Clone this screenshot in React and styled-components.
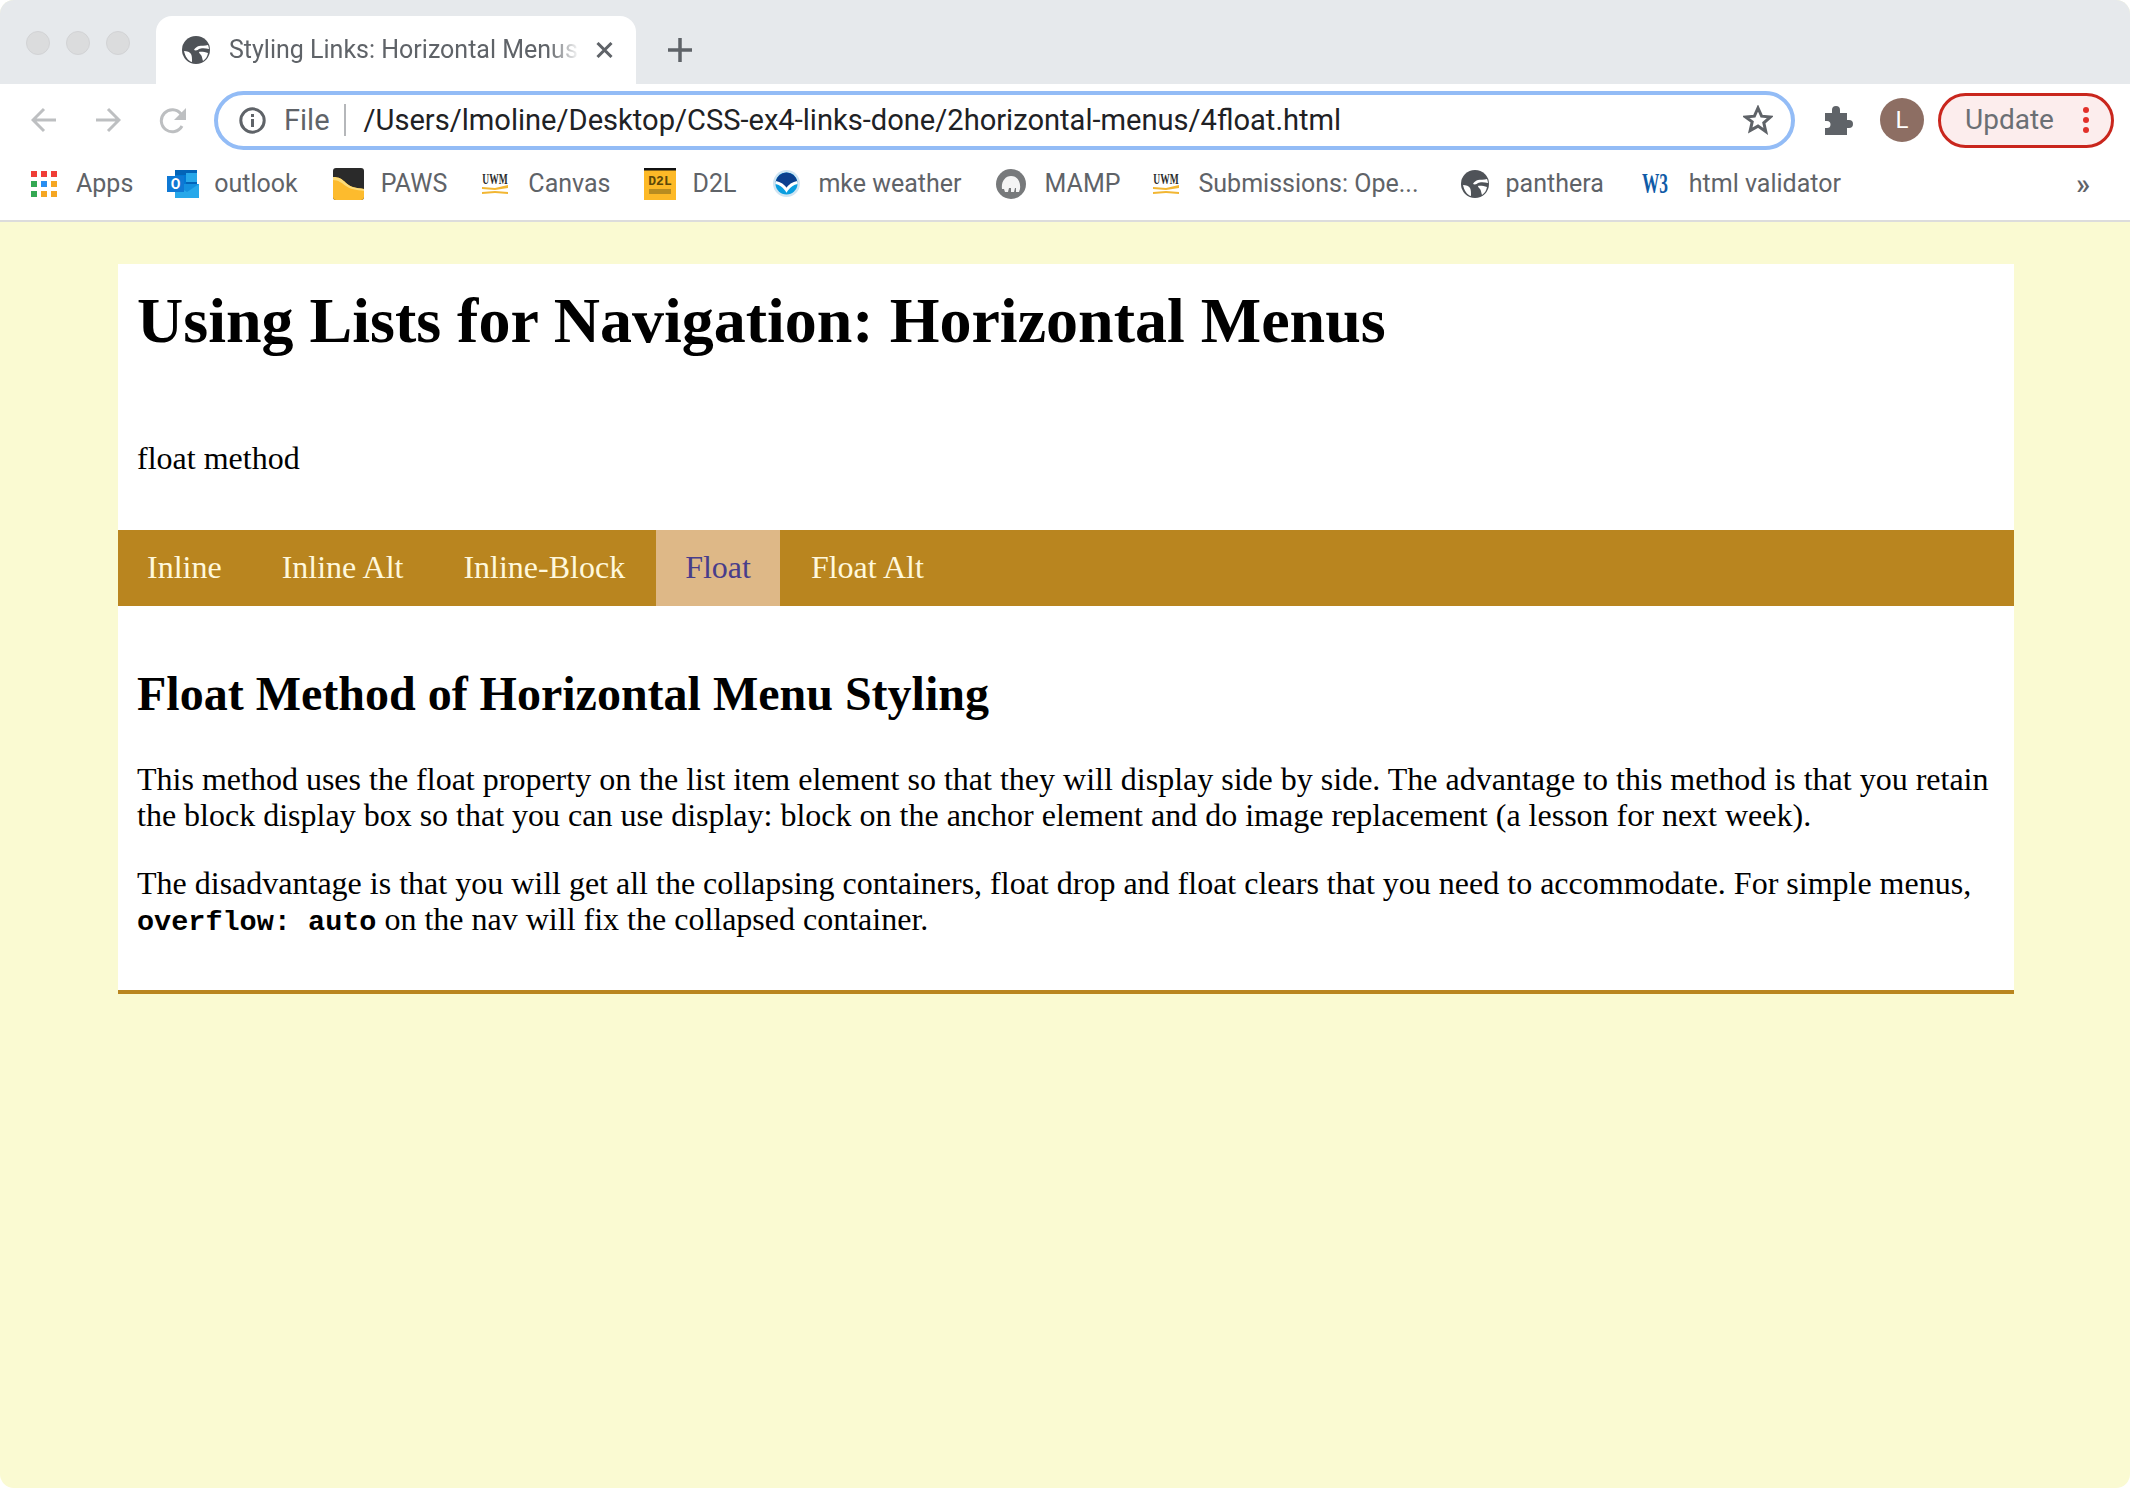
import React from "react";
import styled, { createGlobalStyle } from "styled-components";

const GlobalStyle = createGlobalStyle`
  html, body {
    margin: 0;
    padding: 0;
    background: #fff;
  }
  * {
    box-sizing: border-box;
  }
`;

const Window = styled.div`
  width: 2130px;
  height: 1488px;
  overflow: hidden;
  border-radius: 14px;
  background: #fafad2;
  display: flex;
  flex-direction: column;
`;

const TabStrip = styled.div`
  height: 84px;
  flex: none;
  background: #e6e9ec;
  display: flex;
  align-items: flex-end;
  padding-left: 26px;
`;

const Lights = styled.div`
  display: flex;
  gap: 16px;
  align-self: flex-start;
  margin-top: 31px;
  margin-right: 26px;
`;

const Light = styled.span`
  width: 24px;
  height: 24px;
  border-radius: 50%;
  background: #dbdcdd;
  border: 1px solid #d2d3d5;
`;

const Tab = styled.div`
  width: 480px;
  height: 68px;
  background: #fff;
  border-radius: 16px 16px 0 0;
  display: flex;
  align-items: center;
  padding: 0 23px 0 26px;
`;

const TabTitle = styled.span`
  margin: 0 16px 0 19px;
  width: 351px;
  flex: none;
  overflow: hidden;
  white-space: nowrap;
  font: 400 25px/30px Roboto, "Noto Sans", sans-serif;
  color: #5f6368;
  -webkit-mask-image: linear-gradient(to right, #000 91%, transparent 100%);
  mask-image: linear-gradient(to right, #000 91%, transparent 100%);
`;

const NewTab = styled.div`
  margin: 0 0 10px 32px;
  width: 24px;
  height: 48px;
  display: flex;
  align-items: center;
`;

const Toolbar = styled.div`
  height: 68px;
  flex: none;
  background: #fff;
  display: flex;
  align-items: center;
  padding: 4px 16px 0 31px;
`;

const NavIcons = styled.div`
  display: flex;
  align-items: center;
  gap: 38px;
  margin-right: 27px;
`;

const Omnibox = styled.div`
  width: 1582px;
  height: 59px;
  border: 4px solid #93bcf6;
  border-radius: 30px;
  display: flex;
  align-items: center;
  padding: 0 18px 0 21px;
`;

const OriginLabel = styled.span`
  margin-left: 18px;
  font: 400 29px/36px Roboto, "Noto Sans", sans-serif;
  color: #5f6368;
`;

const Divider = styled.span`
  width: 2px;
  height: 32px;
  background: #b5b7ba;
  margin: 0 18px 0 14px;
`;

const UrlText = styled.span`
  flex: 1;
  font: 400 29.1px/36px Roboto, "Noto Sans", sans-serif;
  color: #202124;
  white-space: nowrap;
`;

const ToolbarRight = styled.div`
  display: flex;
  align-items: center;
  margin-left: 28px;
`;

const Avatar = styled.div`
  width: 44px;
  height: 44px;
  margin-left: 27px;
  border-radius: 50%;
  background: #8d6e63;
  color: #fff;
  display: flex;
  align-items: center;
  justify-content: center;
  font: 400 24px Roboto, sans-serif;
`;

const UpdatePill = styled.div`
  width: 176px;
  height: 55px;
  margin-left: 14px;
  border: 3px solid #c9261d;
  border-radius: 28px;
  background: #fceded;
  display: flex;
  align-items: center;
  justify-content: space-between;
  padding: 0 22px 0 24px;
  font: 400 28px/34px Roboto, sans-serif;
  color: #6b6f74;
`;

const Dots = styled.div`
  display: flex;
  flex-direction: column;
  gap: 4px;
  & span {
    width: 6px;
    height: 6px;
    border-radius: 50%;
    background: #e2302a;
  }
`;

const BookmarkBar = styled.div`
  height: 70px;
  flex: none;
  background: #fff;
  border-bottom: 2px solid #dcdcdc;
  display: flex;
  align-items: center;
  padding: 0 0 5px 31px;
`;

const Bookmark = styled.div`
  display: flex;
  align-items: center;
  margin-right: ${(p) => p.$after || 34}px;
  font: 400 25px/30px Roboto, "Noto Sans", sans-serif;
  color: #5f6368;
  white-space: nowrap;
  & svg {
    margin-right: ${(p) => p.$gap || 19}px;
    flex: none;
  }
`;

const Overflow = styled.span`
  margin-left: auto;
  margin-right: 40px;
  font: 500 29px/30px Roboto, sans-serif;
  color: #5f6368;
`;

const PageBody = styled.div`
  flex: 1;
  padding: 42px 116px 0 118px;
  font-family: "Liberation Serif", "Times New Roman", serif;
  color: #000;
`;

const Wrapper = styled.div`
  background: #fff;
  border-bottom: 4px solid #b9851f;
  height: 730px;
`;

const Header = styled.header`
  padding: 0 19px;
  height: 266px;
`;

const Title = styled.h1`
  margin: 0;
  padding-top: 21px;
  font-size: 64px;
  line-height: 72px;
  font-weight: 700;
`;

const Subtitle = styled.p`
  margin: 83px 0 0;
  font-size: 32px;
  line-height: 36px;
`;

const Menu = styled.ul`
  margin: 0;
  padding: 0;
  list-style: none;
  height: 76px;
  background: #b9851f;
  display: flex;
  gap: 2px;
`;

const MenuItem = styled.li`
  padding: 0 29px 2px;
  display: flex;
  align-items: center;
  font-size: 32px;
  color: ${(p) => (p.$active ? "#483d8b" : "#fff8dc")};
  background: ${(p) => (p.$active ? "#deb887" : "transparent")};
`;

const Content = styled.section`
  padding: 0 19px;
`;

const SectionTitle = styled.h2`
  margin: 0;
  padding-top: 64px;
  font-size: 48px;
  line-height: 48px;
  font-weight: 700;
`;

const Para = styled.p`
  margin: ${(p) => (p.$first ? "43px" : "32px")} 0 0;
  font-size: 32px;
  line-height: 36px;
`;

const Code = styled.code`
  font-family: "Liberation Mono", "Courier New", monospace;
  font-size: 28.5px;
  font-weight: 700;
`;

const GlobeIcon = () => (
  <svg width="28" height="28" viewBox="0 0 28 28">
    <circle cx="14" cy="14" r="14" fill="#4f5358" />
    <path d="M26 9c-3 1-7 .5-9 1-2 .5-4 2-5 4 2 1 4 0 5-1 2-1 6-1 10 0-.2-1.500-.5-3-1-4zM17 16c2-.5 6 0 9 1-.5 3-2 6-5 8-1-3-1-5-2-6s-2-2-2-3zM2 15c3 0 6 1 7 3s1 4 1 8C6 25 3 20 2 15z" fill="#fff" />
  </svg>
);

const BackIcon = ({ flip }) => (
  <svg width="26" height="26" viewBox="0 0 26 26" style={flip ? { transform: "scaleX(-1)" } : undefined}>
    <path d="M25 13H2M13 2L2 13l11 11" fill="none" stroke="#bdbfc1" strokeWidth="3" />
  </svg>
);

const ReloadIcon = () => (
  <svg width="28" height="27" viewBox="0 0 28 27">
    <path d="M23 19a11 11 0 1 1-1-12" fill="none" stroke="#bdbfc1" strokeWidth="3" />
    <path d="M27 1v12H15z" fill="#bdbfc1" />
  </svg>
);

const InfoIcon = () => (
  <svg width="27" height="27" viewBox="0 0 27 27">
    <circle cx="13.500" cy="13.500" r="11.700" fill="none" stroke="#5f6368" strokeWidth="3" />
    <rect x="12" y="12" width="3" height="8" fill="#5f6368" />
    <rect x="12" y="7" width="3" height="3" fill="#5f6368" />
  </svg>
);

const StarIcon = () => (
  <svg width="30" height="30" viewBox="0 0 30 30">
    <path d="M15 3l3.600 8.200 8.900.8-6.700 5.900 2 8.700L15 21.100 7.200 25.600l2-8.700L2.500 12l8.900-.8z" fill="none" stroke="#5f6368" strokeWidth="3" strokeLinejoin="miter" />
  </svg>
);

const PuzzleIcon = () => (
  <svg width="30" height="29" viewBox="0 0 30 29">
    <path d="M2 7h7V4a4 4 0 0 1 8 0v3h7v7h2a4 4 0 0 1 0 8h-2v7H2v-7h2a3.500 3.500 0 0 0 0-7H2z" fill="#5f6368" />
  </svg>
);

const AppsIcon = () => {
  const colors = ["#ef3e36", "#ef3e36", "#ef3e36", "#34a853", "#2a8df0", "#f5a623", "#34a853", "#f5a623", "#f5a623"];
  return (
    <svg width="26" height="26" viewBox="0 0 26 26">
      {colors.map((c, i) => (
        <rect key={i} x={(i % 3) * 10} y={Math.floor(i / 3) * 10} width="6" height="6" fill={c} />
      ))}
    </svg>
  );
};

const OutlookIcon = () => (
  <svg width="32" height="28" viewBox="0 0 32 28">
    <rect x="8" y="0" width="22" height="14" fill="#0364b8" />
    <rect x="19" y="3" width="11" height="9" fill="#28a8ea" />
    <rect x="8" y="5" width="11" height="9" fill="#0078d4" />
    <path d="M8 14h24v14H8z" fill="#1490df" />
    <path d="M8 14l12 8 12-8v14H8z" fill="#28a8ea" />
    <rect x="0" y="6" width="17" height="16" fill="#0f78d4" />
    <text x="8.500" y="19" textAnchor="middle" fontFamily="Roboto, sans-serif" fontSize="14" fontWeight="700" fill="#fff">O</text>
  </svg>
);

const PawsIcon = () => (
  <svg width="33" height="32" viewBox="0 0 33 32">
    <rect x="1" y="0" width="31" height="32" rx="3" fill="#2a2a2a" />
    <path d="M1 9c6 0 9 2 13 6 4 4 10 5 18 6v8a3 3 0 0 1-3 3H4a3 3 0 0 1-3-3z" fill="#fdbb2d" />
    <path d="M1 9c6 0 9 2 13 6 4 4 10 5 18 6v2c-8-1-14-2-18-5-4-3-8-6-13-6z" fill="#fddc7a" />
  </svg>
);

const UwmIcon = () => (
  <svg width="26" height="26" viewBox="0 0 26 26">
    <text transform="translate(13 13) scale(.68 1)" textAnchor="middle" fontFamily="Liberation Serif, serif" fontSize="14" fontWeight="700" fill="#2c2c2c">UWM</text>
    <path d="M0 16l13 1 13-3v3l-13 2-13-1zM0 21l13-1 13 1v2l-13-1-13 1z" fill="#f2b632" />
  </svg>
);

const D2lIcon = () => (
  <svg width="32" height="32" viewBox="0 0 32 32">
    <rect width="32" height="32" fill="#fdb927" />
    <rect width="32" height="2.500" fill="#111" />
    <text x="16" y="17" textAnchor="middle" fontFamily="Liberation Mono, monospace" fontSize="13" fontWeight="700" fill="#5c4708">D2L</text>
    <rect x="5" y="21" width="22" height="5" fill="#b98c20" />
  </svg>
);

const NoaaIcon = () => (
  <svg width="27" height="27" viewBox="0 0 27 27">
    <circle cx="13.500" cy="13.500" r="13.500" fill="#cfe4f2" />
    <circle cx="13.500" cy="13.500" r="11" fill="#0a9ee0" />
    <path d="M2.600 12a11 11 0 0 1 21.800 0Q18 13 13.500 19 9 13 2.600 12z" fill="#0b3f8e" />
    <path d="M2.600 12.500Q9 13.500 13.500 20 18 13.500 24.400 12.500" fill="none" stroke="#fff" strokeWidth="3" />
  </svg>
);

const MampIcon = () => (
  <svg width="30" height="30" viewBox="0 0 30 30">
    <circle cx="15" cy="15" r="15" fill="#77797b" />
    <path d="M6 20c-1-7 3-13 9-13s10 5 9 13l-1 3h-3v-4h-1l-1 4h-3v-4h-2l-1 4H9l-1-3z" fill="#f4f4f4" />
  </svg>
);

const W3Icon = () => (
  <svg width="30" height="33" viewBox="0 0 30 33">
    <text transform="translate(15 26) scale(.6 1)" textAnchor="middle" fontFamily="Liberation Serif, serif" fontSize="29" fontWeight="700" fill="#0f5ba7">W3</text>
  </svg>
);

const CloseIcon = () => (
  <svg width="17" height="16" viewBox="0 0 17 16">
    <path d="M1.500 1l14 14M15.500 1l-14 14" stroke="#5f6368" strokeWidth="3" />
  </svg>
);

const PlusIcon = () => (
  <svg width="24" height="24" viewBox="0 0 24 24">
    <path d="M12 0v24M0 12h24" stroke="#5f6368" strokeWidth="3.500" />
  </svg>
);

const bookmarks = [
  { label: "Apps", icon: <AppsIcon /> },
  { label: "outlook", icon: <OutlookIcon />, gap: 15 },
  { label: "PAWS", icon: <PawsIcon />, gap: 16, after: 35 },
  { label: "Canvas", icon: <UwmIcon />, gap: 20 },
  { label: "D2L", icon: <D2lIcon />, gap: 16, after: 37 },
  { label: "mke weather", icon: <NoaaIcon />, gap: 18 },
  { label: "MAMP", icon: <MampIcon />, gap: 19, after: 33 },
  { label: "Submissions: Ope...", icon: <UwmIcon />, gap: 19, after: 42 },
  { label: "panthera", icon: <GlobeIcon />, gap: 17, after: 36 },
  { label: "html validator", icon: <W3Icon />, gap: 19 },
];

const menuItems = ["Inline", "Inline Alt", "Inline-Block", "Float", "Float Alt"];

const App = () => {
  return (
    <Window>
      <GlobalStyle />
      <TabStrip>
        <Lights>
          <Light />
          <Light />
          <Light />
        </Lights>
        <Tab>
          <GlobeIcon />
          <TabTitle>Styling Links: Horizontal Menus</TabTitle>
          <CloseIcon />
        </Tab>
        <NewTab>
          <PlusIcon />
        </NewTab>
      </TabStrip>
      <Toolbar>
        <NavIcons>
          <BackIcon />
          <BackIcon flip />
          <ReloadIcon />
        </NavIcons>
        <Omnibox>
          <InfoIcon />
          <OriginLabel>File</OriginLabel>
          <Divider />
          <UrlText>/Users/lmoline/Desktop/CSS-ex4-links-done/2horizontal-menus/4float.html</UrlText>
          <StarIcon />
        </Omnibox>
        <ToolbarRight>
          <PuzzleIcon />
          <Avatar>L</Avatar>
          <UpdatePill>
            Update
            <Dots>
              <span />
              <span />
              <span />
            </Dots>
          </UpdatePill>
        </ToolbarRight>
      </Toolbar>
      <BookmarkBar>
        {bookmarks.map((b) => (
          <Bookmark key={b.label} $gap={b.gap} $after={b.after}>
            {b.icon}
            {b.label}
          </Bookmark>
        ))}
        <Overflow>»</Overflow>
      </BookmarkBar>
      <PageBody>
        <Wrapper>
          <Header>
            <Title>Using Lists for Navigation: Horizontal Menus</Title>
            <Subtitle>float method</Subtitle>
          </Header>
          <Menu>
            {menuItems.map((item) => (
              <MenuItem key={item} $active={item === "Float"}>
                {item}
              </MenuItem>
            ))}
          </Menu>
          <Content>
            <SectionTitle>Float Method of Horizontal Menu Styling</SectionTitle>
            <Para $first>
              This method uses the float property on the list item element so that they will display side by side. The
              advantage to this method is that you retain the block display box so that you can use display: block on the
              anchor element and do image replacement (a lesson for next week).
            </Para>
            <Para>
              The disadvantage is that you will get all the collapsing containers, float drop and float clears that you
              need to accommodate. For simple menus, <Code>overflow: auto</Code> on the nav will fix the collapsed
              container.
            </Para>
          </Content>
        </Wrapper>
      </PageBody>
    </Window>
  );
};

export default App;
